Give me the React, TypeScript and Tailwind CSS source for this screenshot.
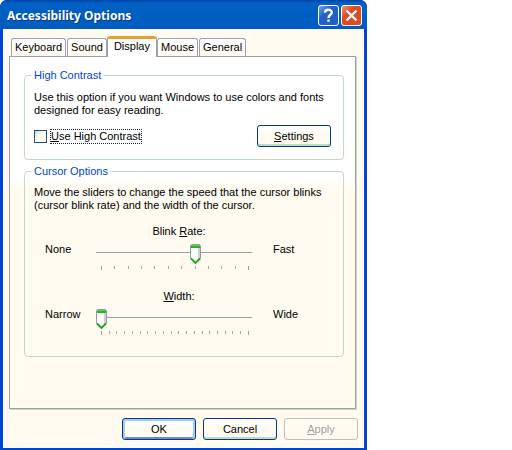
import React, { useState } from 'react';
import clsx from 'clsx';

const TABS = ['Keyboard', 'Sound', 'Display', 'Mouse', 'General'];

function Group({ title, className, children }: { title: string; className?: string; children: React.ReactNode }) {
  return (
    <fieldset className={clsx('border border-[#c0dcc0] rounded-[4px] px-[9px]', className)}>
      <legend className="ml-[-3px] px-[3px] text-[#0046d5]">{title}</legend>
      {children}
    </fieldset>
  );
}

function XpButton({ children, primary, disabled }: { children: React.ReactNode; primary?: boolean; disabled?: boolean }) {
  return (
    <button
      type="button"
      disabled={disabled}
      className={clsx(
        'w-[74px] h-[22px] rounded-[3px] border text-center',
        disabled && 'border-[#c0c0c0] text-[#a0a0a4] bg-[#fffbf0]',
        !disabled && 'border-[#003c84] bg-linear-to-b from-white from-25% to-[#fffbf0] to-30%',
        primary && 'shadow-[inset_0_2px_0_#a6caf0,inset_2px_0_0_#a6caf0,inset_-2px_0_0_#a6caf0,inset_0_-2px_0_#6a8ccb]',
        !primary && !disabled && 'shadow-[inset_0_-2px_0_#c0dcc0]',
      )}
    >
      {children}
    </button>
  );
}

interface SliderProps {
  id: string;
  label: React.ReactNode;
  low: string;
  high: string;
  max: number;
  initial: number;
}

function Slider({ id, label, low, high, max, initial }: SliderProps) {
  const [value, setValue] = useState(initial);

  return (
    <div>
      <label htmlFor={id} className="block text-center pr-[10px]">{label}</label>
      <div className="flex items-start pt-[5px] pl-[11px]">
        <span className="w-[51px]">{low}</span>
        <div className="relative flex-1 pt-px">
          <input
            id={id}
            type="range"
            min={0}
            max={max}
            value={value}
            onChange={e => setValue(Number(e.target.value))}
            className="block w-full h-[22px] appearance-none bg-[linear-gradient(#a0a0a4,#a0a0a4)] bg-no-repeat bg-[size:calc(100%-2px)_1px] bg-[position:0_8px] [&::-webkit-slider-thumb]:appearance-none [&::-webkit-slider-thumb]:w-[11px] [&::-webkit-slider-thumb]:h-[22px]"
          />
          <svg
            viewBox="0 0 11 21"
            className="absolute top-px w-[11px] h-[21px] pointer-events-none"
            style={{ left: `calc((100% - 11px) * ${value / max})` }}
          >
            <path d="M.5 1.5l1-1h8l1 1v13l-5 5-5-5z" fill="#fffdf8" stroke="#8c9ca4" />
            <path d="M8 4h2v10l-2 2z" fill="#d0d4c8" />
            <path d="M1 1h9v3H1z" fill="#21b821" />
            <path d="M1 1h9v1H1z" fill="#68c868" />
            <path d="M1 14.5l4.5 4.5 4.5-4.5" fill="none" stroke="#22a022" strokeWidth="1.8" />
          </svg>
          <div className="flex justify-between px-[5px]">
            {Array.from({ length: max + 1 }, (_, i) => (
              <span key={i} className={clsx('w-px bg-[#a0a0a4]', i === 0 || i === max ? 'h-[4px]' : 'h-[3px]')} />
            ))}
          </div>
        </div>
        <span className="w-[61px] ml-[19px]">{high}</span>
      </div>
    </div>
  );
}

export default function App() {
  const [tab, setTab] = useState('Display');
  const [highContrast, setHighContrast] = useState(false);

  return (
    <div className="min-h-screen bg-white">
      <div className="w-full max-w-[367px] flex flex-col rounded-t-[7px] overflow-hidden bg-[#0046d5] font-['Liberation_Sans',Arial,sans-serif] text-[11px] leading-[13px] text-black">
        <header className="h-[29px] flex items-center gap-[2px] pl-[7px] pr-[5px] pt-[2px] bg-linear-to-b from-[#0040a8] via-[#0060c4] via-10% to-[#005cc0]">
          <h1 className="flex-1 font-['Noto_Sans','Open_Sans',sans-serif] font-bold text-[12px] leading-[16px] text-white [text-shadow:1px_1px_0_#003c84]">
            Accessibility Options
          </h1>
          <button type="button" aria-label="Help" className="w-[21px] h-[21px] rounded-[3px] border border-white bg-linear-to-br from-[#7aa4e4] to-[#2060c8] to-35%">
            <svg viewBox="0 0 19 19" className="block w-full h-full">
              <path d="M6 6.8C6 2.8 12.8 2.8 12.8 6.4 12.8 8.8 9.5 8.8 9.5 12M9.5 13.4v2.4" fill="none" stroke="#fff" strokeWidth="2.3" />
            </svg>
          </button>
          <button type="button" aria-label="Close" className="w-[21px] h-[21px] rounded-[3px] border border-white bg-linear-to-br from-[#f09070] to-[#e04a20] to-35%">
            <svg viewBox="0 0 19 19" className="block w-full h-full">
              <path d="M4.5 4.5l10 10M14.5 4.5l-10 10" fill="none" stroke="#fff" strokeWidth="2.3" />
            </svg>
          </button>
        </header>

        <main className="mx-[3px] mb-[3px] px-[6px] pt-[7px] pb-[8px] bg-[#fffbf0]">
          <div role="tablist" className="flex items-end pl-[2px]">
            {TABS.map(name => (
              <button
                key={name}
                type="button"
                role="tab"
                aria-selected={tab === name}
                onClick={() => setTab(name)}
                className={clsx(
                  'border border-b-0 rounded-t-[3px] whitespace-nowrap',
                  tab === name
                    ? 'relative h-[21px] -mb-px px-[6px] pb-[3px] -ml-px bg-white border-[#a0a0a4] border-t-[3px] border-t-[#e8a030]'
                    : 'h-[18px] px-[3px] mr-px bg-linear-to-b from-white to-[#fffbf0] border-[#a0a0b8]',
                )}
              >
                {name}
              </button>
            ))}
          </div>

          <div
            role="tabpanel"
            className="mr-[2px] pl-[14px] pr-[11px] pt-[12px] pb-[51px] border border-[#a0a0a4] shadow-[1px_1px_0_#c0dcc0] bg-linear-to-b from-white from-[120px] to-[#fffbf0] to-[132px]"
          >
            <Group title="High Contrast" className="pt-[9px] pb-[12px]">
              <p>Use this option if you want Windows to use colors and fonts designed for easy reading.</p>
              <div className="flex items-center justify-between pt-[8px] pr-[3px]">
                <label className="flex items-center gap-[3px]">
                  <input
                    type="checkbox"
                    checked={highContrast}
                    onChange={e => setHighContrast(e.target.checked)}
                    className="w-[13px] h-[13px] appearance-none border border-[#1c5180] bg-linear-to-br from-[#c0dcc0] to-[#fffbf0] to-40% checked:bg-[#21a121]"
                  />
                  <span className="border border-dotted border-[#202050]"><u>U</u>se High Contrast</span>
                </label>
                <XpButton><u>S</u>ettings</XpButton>
              </div>
            </Group>

            <Group title="Cursor Options" className="mt-[5px] pt-[8px] pb-[21px]">
              <p>Move the sliders to change the speed that the cursor blinks (cursor blink rate) and the width of the cursor.</p>
              <div className="flex flex-col gap-[20px] pt-[13px]">
                <Slider id="blink-rate" label={<>Blink <u>R</u>ate:</>} low="None" high="Fast" max={11} initial={7} />
                <Slider id="cursor-width" label={<><u>W</u>idth:</>} low="Narrow" high="Wide" max={19} initial={0} />
              </div>
            </Group>
          </div>

          <footer className="flex justify-end gap-[7px] pt-[9px]">
            <XpButton primary>OK</XpButton>
            <XpButton>Cancel</XpButton>
            <XpButton disabled><u>A</u>pply</XpButton>
          </footer>
        </main>
      </div>
    </div>
  );
}
